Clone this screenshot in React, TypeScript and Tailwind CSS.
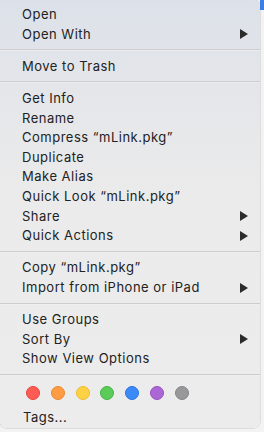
import React from "react";

type Item = { label: string; sub?: boolean } | "sep";

const items: Item[] = [
  { label: "Open" },
  { label: "Open With", sub: true },
  "sep",
  { label: "Move to Trash" },
  "sep",
  { label: "Get Info" },
  { label: "Rename" },
  { label: "Compress \u201cmLink.pkg\u201d" },
  { label: "Duplicate" },
  { label: "Make Alias" },
  { label: "Quick Look \u201cmLink.pkg\u201d" },
  { label: "Share", sub: true },
  { label: "Quick Actions", sub: true },
  "sep",
  { label: "Copy \u201cmLink.pkg\u201d" },
  { label: "Import from iPhone or iPad", sub: true },
  "sep",
  { label: "Use Groups" },
  { label: "Sort By", sub: true },
  { label: "Show View Options" },
  "sep",
];

const tags = [
  { fill: "bg-[#fe5b55]", ring: "border-[#e8443f]" },
  { fill: "bg-[#fd9c42]", ring: "border-[#ea8a30]" },
  { fill: "bg-[#fcd143]", ring: "border-[#eebd2c]" },
  { fill: "bg-[#5bcb5a]", ring: "border-[#45b644]" },
  { fill: "bg-[#3c89f8]", ring: "border-[#2a74e2]" },
  { fill: "bg-[#ad66d5]", ring: "border-[#9752c0]" },
  { fill: "bg-[#98989b]", ring: "border-[#858588]" },
];

function Arrow() {
  return (
    <svg width="8" height="10" viewBox="0 0 8 10" className="text-[#2b2b2b]">
      <path d="M0 0 L8 5 L0 10 Z" fill="currentColor" />
    </svg>
  );
}

export default function App() {
  return (
    <div className="flex h-[432px] w-[264px] bg-[#f3f3f3] font-['Inter','Liberation_Sans',sans-serif] text-[13px] text-[#222222]">
      <div className="flex h-[428px] w-[260px] flex-col rounded-b-[6px] rounded-tr-[6px] bg-[linear-gradient(to_bottom,#dce1e9_0px,#e6e7ea_110px,#ebebeb_200px,#ececec_432px)] pt-[5px] shadow-[0_0_0_0.5px_rgba(0,0,0,0.18)]">
        {items.map((it, i) =>
          it === "sep" ? (
            <div key={i} className="flex h-[12.3px] flex-col justify-center">
              <div className="h-px bg-[#cdcdcf]" />
              <div className="h-px bg-[#f1f1f1]/60" />
            </div>
          ) : (
            <div key={i} className="flex h-[19.7px] items-center justify-between pl-[22px] pr-[12px] leading-none">
              <span className="tracking-[0.5px]">{it.label}</span>
              {it.sub && <Arrow />}
            </div>
          )
        )}
        <div className="flex gap-[10.8px] pl-[26px] pt-[5px] pb-[8px]">
          {tags.map((t, i) => (
            <span key={i} className={`h-[14px] w-[14px] rounded-full border ${t.fill} ${t.ring}`} />
          ))}
        </div>
        <div className="flex h-[20px] items-center pl-[23px] leading-none tracking-[0.5px]">Tags...</div>
      </div>
      <div className="flex w-[4px] flex-col">
        <div className="h-[10px] bg-[#3b7fe6]" />
      </div>
    </div>
  );
}
